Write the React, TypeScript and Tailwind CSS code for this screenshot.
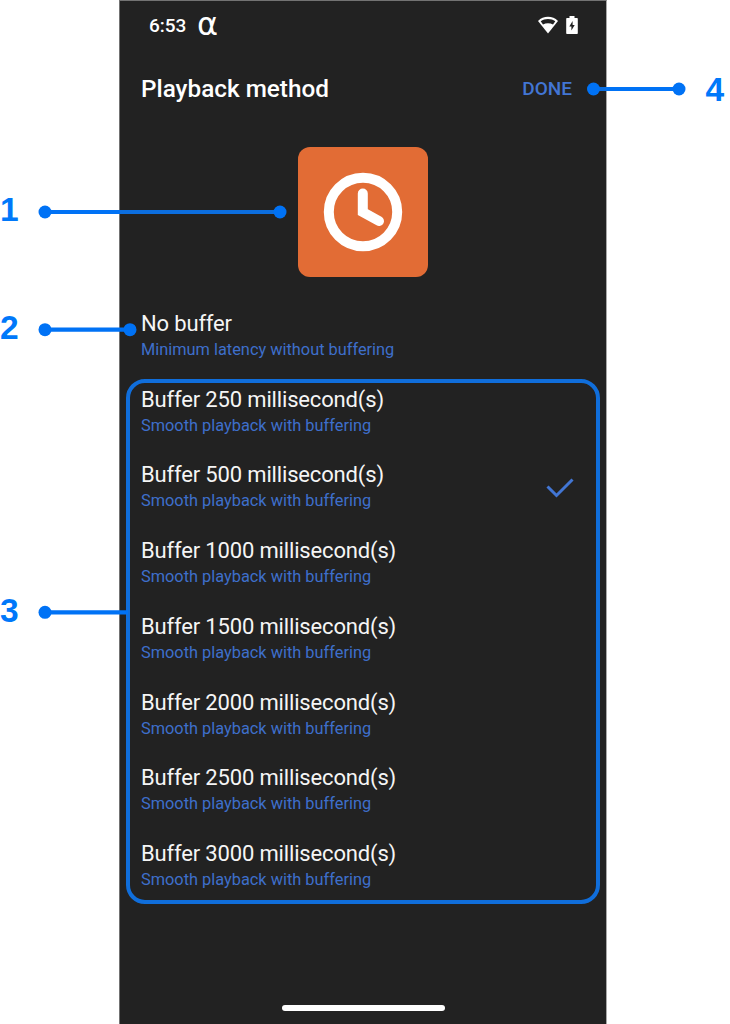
import React, { useState } from 'react';
import clsx from 'clsx';

const methods = [
  { title: 'No buffer', sub: 'Minimum latency without buffering' },
  { title: 'Buffer 250 millisecond(s)', sub: 'Smooth playback with buffering' },
  { title: 'Buffer 500 millisecond(s)', sub: 'Smooth playback with buffering' },
  { title: 'Buffer 1000 millisecond(s)', sub: 'Smooth playback with buffering' },
  { title: 'Buffer 1500 millisecond(s)', sub: 'Smooth playback with buffering' },
  { title: 'Buffer 2000 millisecond(s)', sub: 'Smooth playback with buffering' },
  { title: 'Buffer 2500 millisecond(s)', sub: 'Smooth playback with buffering' },
  { title: 'Buffer 3000 millisecond(s)', sub: 'Smooth playback with buffering' },
];

function StatusBar() {
  return (
    <div className="flex h-[50px] items-center justify-between pl-[29px] pr-[28px] text-white">
      <div className="flex items-center">
        <span className="-mt-[2px] w-[48px] text-[19px] font-medium leading-none">6:53</span>
        <span className="-mt-[4px] font-['DejaVu_Sans',sans-serif] text-[32px] leading-none">α</span>
      </div>
      <div className="-mt-[2px] flex items-center gap-[8px]">
        <svg width="20" height="18" viewBox="0 0 20 18" className="block">
          <path d="M10 .8C6.200 .8 2.800 2.300 0 4.900L10 17.500L20 4.900C17.200 2.300 13.800 .8 10 .8Z" fill="#fff" />
          <path d="M10 2.900C7.200 2.900 4.900 3.700 2.700 5.200L5 8.500C6.500 7.700 8.200 7.300 10 7.300S13.500 7.700 15 8.500L17.300 5.200C15.100 3.700 12.800 2.900 10 2.900Z" fill="#222" />
        </svg>
        <svg width="12" height="18" viewBox="0 0 12 18" className="block">
          <path d="M3.500 0h5v2H11a.8.8 0 0 1 .8.8v14.400a.8.8 0 0 1-.8.8H1a.8.8 0 0 1-.8-.8V2.800A.8.8 0 0 1 1 2h2.500Z" fill="#fff" />
          <path d="M6.600 5L3.300 10.500H5.400V14.500L8.700 9H6.600Z" fill="#222" />
        </svg>
      </div>
    </div>
  );
}

function ClockTile() {
  return (
    <div className="mx-auto flex size-[130px] items-center justify-center rounded-[12px] bg-[#e26c35]">
      <svg width="80" height="80" viewBox="0 0 80 80" fill="none" stroke="#fff" strokeWidth="10">
        <circle cx="40" cy="40" r="34.200" />
        <path d="M39.800 21.500V40L56 49" strokeLinecap="round" />
      </svg>
    </div>
  );
}

// numbered pointers that lie over the phone screen
function Callouts() {
  return (
    <div className="pointer-events-none absolute inset-0">
      <div className="absolute left-[126px] top-[379px] h-[525px] w-[474px] rounded-[19px] border-[4.500px] border-[#106edb]" />
      <svg width="730" height="1024" viewBox="0 0 730 1024" className="absolute left-0 top-0" fill="#0072f5">
        <g stroke="#0072f5" strokeWidth="4.200">
          <path d="M45 212H280M45 329.700H130M45 612.300H128M593 89H679" />
          <path d="M120 212H280M593 89H606" stroke="#0c6edf" />
        </g>
        <circle cx="45" cy="212" r="6.500" />
        <circle cx="280" cy="212" r="6.500" />
        <circle cx="45" cy="329.700" r="6.500" />
        <circle cx="130" cy="329.700" r="6.500" />
        <circle cx="45" cy="612.300" r="6.500" />
        <circle cx="593.500" cy="89" r="6.500" />
        <circle cx="679" cy="89" r="6.500" />
      </svg>
      <div className="font-['Liberation_Sans',Arial,sans-serif] text-[33.500px] font-bold leading-[34px] text-[#0078fa]">
        <span className="absolute left-0 top-[193px]">1</span>
        <span className="absolute left-0 top-[311px]">2</span>
        <span className="absolute left-0 top-[594px]">3</span>
        <span className="absolute left-[705.500px] top-[73px]">4</span>
      </div>
    </div>
  );
}

export default function App() {
  const [selected, setSelected] = useState(2);

  return (
    <div className="relative h-[1024px] w-[730px] overflow-hidden bg-white font-['Roboto',sans-serif]">
      <div className="ml-[119px] flex h-full w-[488px] flex-col border-x border-t border-[#737373] border-r-[#a8a8a8] bg-[#222222]">
        <StatusBar />
        <header className="flex h-[76px] items-center justify-between pl-[21px] pr-[34px]">
          <h1 className="text-[24.300px] font-medium leading-none text-white">Playback method</h1>
          <button className="-mt-[2px] text-[19px] font-medium leading-none text-[#4276d4]">DONE</button>
        </header>
        <div className="pt-[20px]">
          <ClockTile />
        </div>
        <ul className="mt-[21px] flex flex-col">
          {methods.map((m, i) => (
            <li
              key={m.title}
              onClick={() => setSelected(i)}
              className="flex h-[75.750px] items-center justify-between pl-[21px] pr-[31px]"
            >
              <div>
                <div className="text-[22px] leading-[28px] tracking-[-0.160px] text-[#f5f5f5]">{m.title}</div>
                <div className="text-[16.350px] leading-[24px] text-[#3e6fcb]">{m.sub}</div>
              </div>
              <svg width="30" height="22" viewBox="0 0 30 22" fill="none" className={clsx(selected !== i && 'hidden')}>
                <path d="M2.500 10.500L11.500 19.500L27.500 3.500" stroke="#4276d4" strokeWidth="3" />
              </svg>
            </li>
          ))}
        </ul>
        <div className="mx-auto mb-[13px] mt-auto h-[6px] w-[163px] rounded-full bg-white" />
      </div>
      <Callouts />
    </div>
  );
}
